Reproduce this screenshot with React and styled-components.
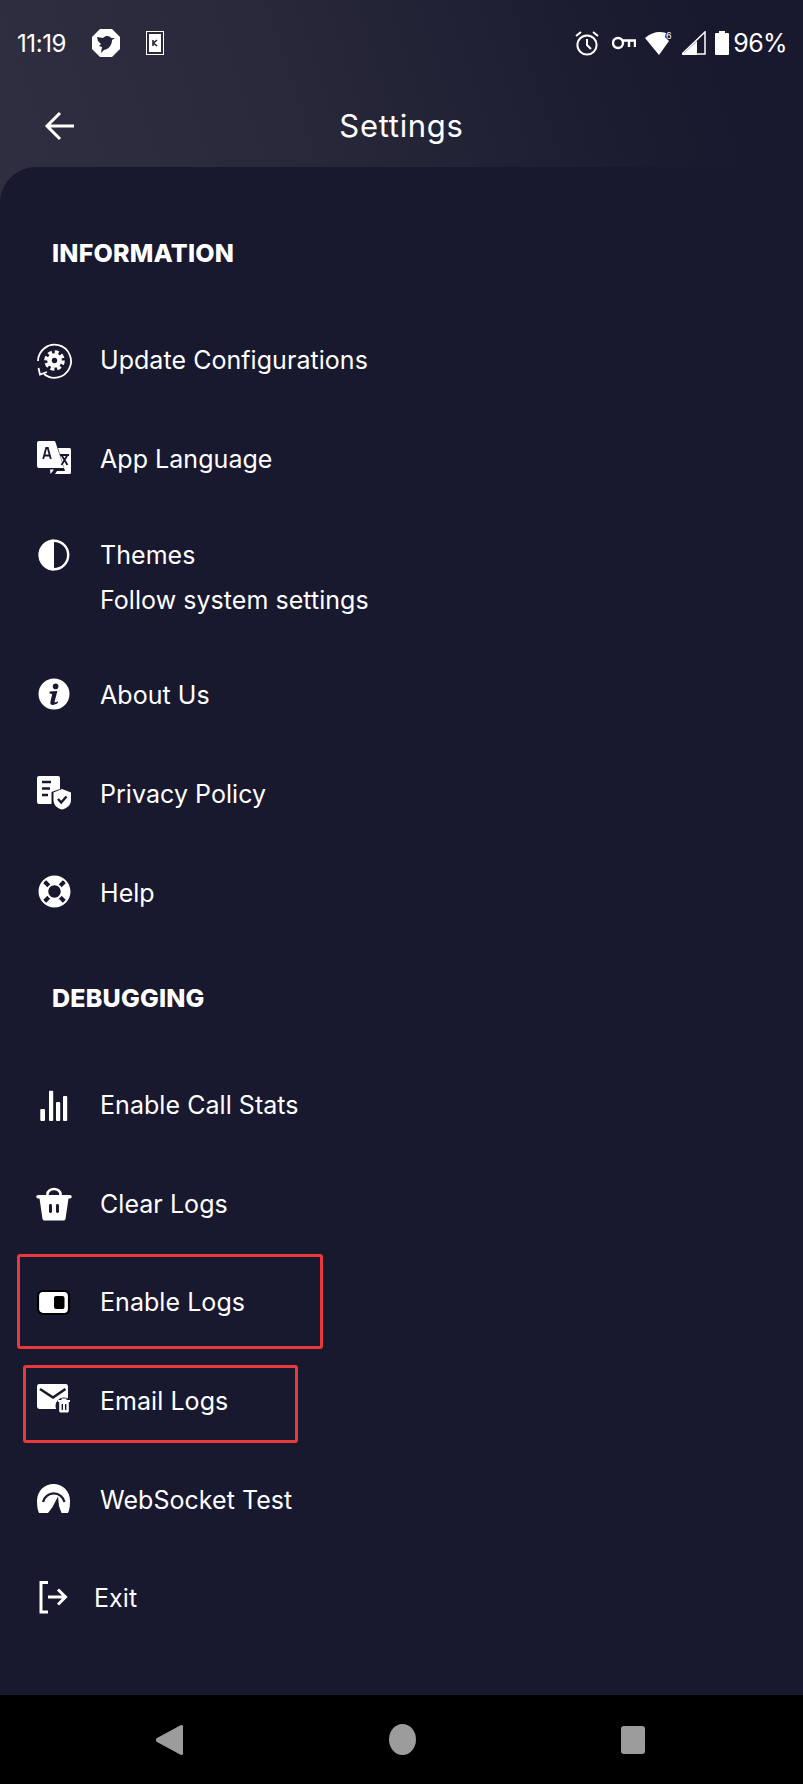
import React from 'react';
import styled, { createGlobalStyle } from 'styled-components';
import { FaLifeRing } from 'react-icons/fa';

const BG = '#18182e';

const GlobalStyle = createGlobalStyle`
  html, body {
    margin: 0;
    padding: 0;
    background: ${BG};
  }
`;

function UpdateIcon() {
  return (
    <svg width="34" height="34" viewBox="0 0 34 34" fill="none" style={{ overflow: 'visible' }}>
      <path d="M1 20 A16.5 16.5 0 1 1 7 33" stroke="#fff" strokeWidth="1.8" transform="translate(0 -1)" />
      <path d="M1.5 26 L3 32.5 L10 30" stroke="#fff" strokeWidth="1.8" />
      <circle cx="17.5" cy="18.5" r="8.6" stroke="#fff" strokeWidth="3.4" strokeDasharray="4 2.75" />
      <circle cx="17.5" cy="18.5" r="5" stroke="#fff" strokeWidth="4.6" />
    </svg>
  );
}

function LanguageIcon() {
  return (
    <svg width="34" height="34" viewBox="0 0 34 34">
      <path d="M2 0 H17 A1.5 1.5 0 0 1 18.4 1 L27 27 H2 A2 2 0 0 1 0 25 V2 A2 2 0 0 1 2 0 Z" fill="#fff" />
      <path d="M21 7 H32.5 A1.5 1.5 0 0 1 34 8.5 V31.5 A1.5 1.5 0 0 1 32.5 33 H18 L20 30 H28 Z" fill="#fff" />
      <path d="M13 28.5 H17 L13.5 33 Z" fill="#fff" />
      <path d="M6.2 18 L9.2 7 H10.8 L13.8 18 M7.4 14.5 H12.6" stroke={BG} strokeWidth="1.8" fill="none" />
      <path d="M23 14 H32 M24.5 24 L30.5 14 M30.5 24 L24.5 14" stroke={BG} strokeWidth="1.8" fill="none" />
    </svg>
  );
}

function ThemeIcon() {
  return (
    <svg width="34" height="34" viewBox="0 0 34 34" fill="none">
      <circle cx="17" cy="17" r="14.2" stroke="#fff" strokeWidth="2.4" />
      <path d="M17 1.5 A15.5 15.5 0 0 0 17 32.5 Z" fill="#fff" />
    </svg>
  );
}

function InfoIcon() {
  return (
    <svg width="34" height="34" viewBox="0 0 34 34">
      <circle cx="17" cy="17" r="15.5" fill="#fff" />
      <circle cx="18.6" cy="9.4" r="2.8" fill={BG} />
      <path d="M12.6 14.6 L20.4 14 L17.6 24.4 C17.2 25.8 18.6 25.6 20.6 24.2 L21 25.8 C17.6 28.4 12.6 29.2 13.4 25 L15.2 17 L12.6 16.6 Z" fill={BG} />
    </svg>
  );
}

function PrivacyIcon() {
  return (
    <svg width="34" height="34" viewBox="0 0 34 34">
      <path d="M2 0 H21 A2 2 0 0 1 23 2 V13 L14.5 16 V28 H2 A2 2 0 0 1 0 26 V2 A2 2 0 0 1 2 0 Z" fill="#fff" />
      <path d="M5 6 H14 M5 12.5 H13 M5 19 H11" stroke={BG} strokeWidth="2.6" />
      <path d="M25 13 L34 16.5 V24 C34 29 30 32.5 25 33.5 C20 32.5 16.5 29 16.5 24 V16.5 Z" fill="#fff" />
      <path d="M21 23 L24.2 26.5 L29.5 20.5" stroke={BG} strokeWidth="2.4" fill="none" />
    </svg>
  );
}

function StatsIcon() {
  return (
    <svg width="34" height="34" viewBox="0 0 34 34">
      <rect x="3.3" y="22" width="4.7" height="12" rx="1" fill="#fff" />
      <rect x="12" y="3.7" width="4.2" height="30.3" rx="1" fill="#fff" />
      <rect x="19" y="15" width="4.2" height="19" rx="1" fill="#fff" />
      <rect x="26" y="9" width="4.2" height="25" rx="1" fill="#fff" />
    </svg>
  );
}

function BasketIcon() {
  return (
    <svg width="34" height="34" viewBox="0 -3 34 34" style={{ overflow: 'visible' }}>
      <path d="M10.5 8 V5 A6 4.6 0 0 1 23.5 5 V8" stroke="#fff" strokeWidth="2.6" fill="none" />
      <path d="M1 6 H33 A1 1 0 0 1 33 9.5 H31.5 L28.5 30 A2 2 0 0 1 26.5 31.5 H7.5 A2 2 0 0 1 5.5 30 L2.5 9.5 H1 A1 1 0 0 1 1 6 Z" fill="#fff" />
      <rect x="12" y="15" width="3" height="9" rx="1.4" fill={BG} />
      <rect x="19" y="15" width="3" height="9" rx="1.4" fill={BG} />
    </svg>
  );
}

function ToggleIcon() {
  return (
    <svg width="34" height="34" viewBox="0 0 34 34">
      <rect x="1" y="7" width="31" height="23" rx="5" fill="#fff" stroke="#000" strokeWidth="2.2" />
      <rect x="17" y="12" width="10.5" height="13" rx="2" fill="#000" />
    </svg>
  );
}

function MailIcon() {
  return (
    <svg width="34" height="34" viewBox="0 0 34 34">
      <rect x="0" y="1" width="31" height="25" rx="2.4" fill="#fff" />
      <path d="M3 6 L16 14.5 L28.5 6" stroke={BG} strokeWidth="2.6" fill="none" />
      <circle cx="27" cy="23" r="8.5" fill={BG} />
      <path d="M24.5 15.5 H29.5 V17 H33 V19 H31.8 V28 A1.5 1.5 0 0 1 30.3 29.5 H23.7 A1.5 1.5 0 0 1 22.2 28 V19 H21 V17 H24.5 Z" fill="#fff" />
      <path d="M25.3 21 V27 M28.7 21 V27" stroke={BG} strokeWidth="1.4" />
    </svg>
  );
}

function GaugeIcon() {
  return (
    <svg width="34" height="34" viewBox="0 0 34 34">
      <path d="M2 31 C0.5 28 0 24 0 18.5 A16.5 16.5 0 0 1 33 18.5 C33 24 32.5 28 31 31 Z" fill="#fff" />
      <path d="M6 20 A11 11 0 0 1 27.5 20" stroke={BG} strokeWidth="2.2" fill="none" />
      <path d="M11 31 L15.5 25 L21 14.5 L22 24 L24.5 31 Z" fill={BG} />
    </svg>
  );
}

function ExitIcon() {
  return (
    <svg width="30" height="34" viewBox="0 0 30 34" fill="none" stroke="#fff" strokeWidth="3">
      <path d="M9 2.5 H2 V32 H9" />
      <path d="M9 17 H26 M19 9.5 L26.5 17 L19 24.5" />
    </svg>
  );
}

const informationRows = [
  { label: 'Update Configurations', icon: <UpdateIcon /> },
  { label: 'App Language', icon: <LanguageIcon /> },
  { label: 'Themes', sub: 'Follow system settings', icon: <ThemeIcon /> },
  { label: 'About Us', icon: <InfoIcon /> },
  { label: 'Privacy Policy', icon: <PrivacyIcon /> },
  { label: 'Help', icon: <FaLifeRing size={33} color="#fff" /> },
];

function App() {
  return (
    <Page>
      <GlobalStyle />
      <StatusBar>
        <StatusLeft>
          <StatusText>11:19</StatusText>
          <svg width="28" height="28" viewBox="0 0 28 28">
            <path d="M8 0 H20 L28 8 V20 L20 28 H8 L0 20 V8 Z" fill="#fff" />
            <path d="M5 8 L11 9 C14 6 18 7 19 9 L23 9 L20 11 C20 16 17 20 12 21 L9 24 L10 18 L7 17 L9 15 L6 12 Z" fill="#25253a" />
          </svg>
          <svg width="18" height="24" viewBox="0 0 18 24">
            <rect x="0.5" y="0.5" width="17" height="23" fill="none" stroke="#fff" />
            <rect x="3" y="3" width="12" height="18" fill="#fff" />
            <path d="M7 9 V15 M11 9 L7.5 12 L11 15" stroke="#25253a" strokeWidth="1.6" fill="none" />
          </svg>
        </StatusLeft>
        <StatusRight>
          <AlarmIcon width="24" height="25" viewBox="0 0 24 25" fill="none" stroke="#fff" strokeWidth="2">
            <circle cx="12" cy="14" r="9.6" />
            <path d="M12 8 V14 L16 18 M1 5 L6 1 M23 5 L18 1" />
          </AlarmIcon>
          <svg width="24" height="14" viewBox="0 0 24 14" fill="none" stroke="#fff" strokeWidth="2.4">
            <circle cx="6" cy="7" r="5" />
            <path d="M11 4.5 H23 V11 M17 4.5 V11" />
          </svg>
          <svg width="28" height="24" viewBox="0 0 28 24">
            <path d="M0 7 C7 1 14 0 21 2 L20 6 L24 10 L14 24 Z" fill="#fff" />
            <text x="21" y="8" fill="#fff" fontSize="9" fontFamily="Inter, sans-serif">6</text>
          </svg>
          <svg width="24" height="24" viewBox="0 0 24 24">
            <path d="M0 23 L23 1 V23 Z" fill="none" stroke="#fff" strokeWidth="1.5" />
            <path d="M0 24 L15 10 V24 Z" fill="#fff" />
          </svg>
          <svg width="14" height="24" viewBox="0 0 14 24">
            <path d="M4 0 H10 V2 H13 A1 1 0 0 1 14 3 V23 A1 1 0 0 1 13 24 H1 A1 1 0 0 1 0 23 V3 A1 1 0 0 1 1 2 H4 Z" fill="#fff" />
          </svg>
          <BatteryText>96%</BatteryText>
        </StatusRight>
      </StatusBar>

      <Header>
        <BackButton>
          <svg width="32" height="30" viewBox="0 0 32 30" fill="none" stroke="#fff" strokeWidth="3">
            <path d="M30 15 H3 M16 2 L3 15 L16 28" />
          </svg>
        </BackButton>
        <HeaderTitle>Settings</HeaderTitle>
      </Header>

      <Sheet>
        <SectionTitle $top={71} $bottom={42}>INFORMATION</SectionTitle>
        {informationRows.map(row => (
          <Row key={row.label} $tall={Boolean(row.sub)}>
            <RowIcon $tall={Boolean(row.sub)}>{row.icon}</RowIcon>
            <RowText>
              <RowLabel>{row.label}</RowLabel>
              {row.sub && <RowSub>{row.sub}</RowSub>}
            </RowText>
          </Row>
        ))}

        <SectionTitle $top={42} $bottom={42}>DEBUGGING</SectionTitle>
        <Row>
          <RowIcon><StatsIcon /></RowIcon>
          <RowLabel>Enable Call Stats</RowLabel>
        </Row>
        <Row>
          <RowIcon><BasketIcon /></RowIcon>
          <RowLabel>Clear Logs</RowLabel>
        </Row>
        <Row>
          <Highlight $left={17} $width={306} $top={2} $height={95} />
          <RowIcon><ToggleIcon /></RowIcon>
          <RowLabel>Enable Logs</RowLabel>
        </Row>
        <Row>
          <Highlight $left={23} $width={275} $top={14} $height={78} />
          <RowIcon><MailIcon /></RowIcon>
          <RowLabel>Email Logs</RowLabel>
        </Row>
        <Row>
          <RowIcon><GaugeIcon /></RowIcon>
          <RowLabel>WebSocket Test</RowLabel>
        </Row>
        <Row $narrow>
          <RowIcon $narrow><ExitIcon /></RowIcon>
          <RowLabel>Exit</RowLabel>
        </Row>
      </Sheet>

      <NavBar>
        <svg width="28" height="32" viewBox="0 0 28 32">
          <path d="M26 1 L2 14 A2.4 2.4 0 0 0 2 18 L26 31 A1.6 1.6 0 0 0 28 30 V2 A1.6 1.6 0 0 0 26 1 Z" fill="#9c9c9c" />
        </svg>
        <HomeDot />
        <RecentSquare />
      </NavBar>
    </Page>
  );
}

const Page = styled.div`
  width: 803px;
  height: 1784px;
  display: flex;
  flex-direction: column;
  overflow: hidden;
  font-family: Inter, "Liberation Sans", sans-serif;
  color: #fff;
  background: linear-gradient(72deg, #2f2f41 0%, #28283a 38%, ${BG} 88%) no-repeat top / 100% 210px;
  background-color: ${BG};
`;

const StatusBar = styled.div`
  height: 74px;
  padding: 12px 16px 0 17px;
  box-sizing: border-box;
  display: flex;
  align-items: center;
  justify-content: space-between;
`;

const StatusLeft = styled.div`
  display: flex;
  align-items: center;
  gap: 26px;
`;

const StatusRight = styled.div`
  display: flex;
  align-items: center;
  gap: 9px;
`;

const AlarmIcon = styled.svg`
  margin-right: 4px;
`;

const StatusText = styled.span`
  font-size: 24px;
  letter-spacing: -0.4px;
`;

const BatteryText = styled.span`
  font-size: 25px;
  margin-left: -5px;
  letter-spacing: -0.6px;
`;

const Header = styled.div`
  height: 93px;
  display: flex;
  align-items: center;
  justify-content: center;
  position: relative;
  padding-top: 10px;
  box-sizing: border-box;
`;

const BackButton = styled.div`
  position: absolute;
  left: 44px;
  top: 37px;
  display: flex;
`;

const HeaderTitle = styled.h1`
  margin: 0;
  font-size: 31px;
  font-weight: 400;
  letter-spacing: 0.7px;
`;

const Sheet = styled.div`
  flex: 1;
  background: ${BG};
  border-radius: 36px 36px 0 0;
`;

const SectionTitle = styled.h2`
  margin: 0;
  padding: ${p => p.$top}px 0 ${p => p.$bottom}px 52px;
  font-size: 25px;
  line-height: 30px;
  font-weight: 800;
  letter-spacing: 0.2px;
`;

const Row = styled.div`
  position: relative;
  height: ${p => (p.$tall ? 138 : 98.6)}px;
  padding-left: 37px;
  display: flex;
  align-items: center;
  gap: ${p => (p.$narrow ? 23 : 29)}px;
  box-sizing: border-box;
`;

const RowIcon = styled.div`
  width: 34px;
  height: 34px;
  display: flex;
  align-items: center;
  justify-content: center;
  flex-shrink: 0;
  ${p => p.$tall && 'align-self: flex-start; margin-top: 31px;'}
`;

const RowText = styled.div`
  display: flex;
  flex-direction: column;
  gap: 13px;
`;

const RowLabel = styled.span`
  font-size: 25px;
  line-height: 30px;
  padding-top: 2px;
  font-weight: 400;
  letter-spacing: 0.05px;
`;

const RowSub = styled(RowLabel)``;

const Highlight = styled.div`
  position: absolute;
  left: ${p => p.$left}px;
  top: ${p => p.$top}px;
  width: ${p => p.$width}px;
  height: ${p => p.$height}px;
  border: 3px solid #e83a3a;
  border-radius: 3px;
  box-sizing: border-box;
`;

const NavBar = styled.div`
  height: 89px;
  background: #000;
  position: relative;
  display: grid;
  grid-template-columns: 28px 27px 24px;
  justify-content: space-between;
  align-items: center;
  padding: 0 158px 0 155px;
  box-sizing: border-box;
`;

const HomeDot = styled.div`
  width: 27px;
  height: 31px;
  border-radius: 50%;
  background: #9c9c9c;
`;

const RecentSquare = styled.div`
  width: 24px;
  height: 28px;
  border-radius: 3px;
  background: #9c9c9c;
`;

export default App;
